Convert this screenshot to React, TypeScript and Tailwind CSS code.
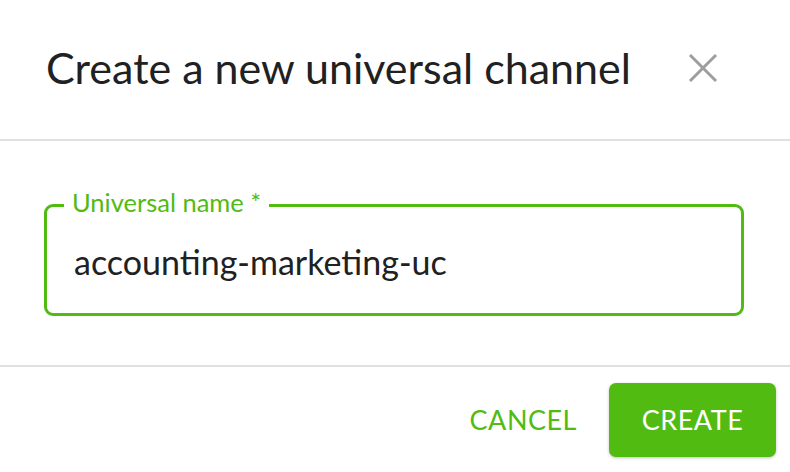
export default function App() {
  return (
    <div className="w-[790px] h-[472px] bg-white flex flex-col overflow-hidden font-['Lato','Noto_Sans',sans-serif]">
      {/* header */}
      <div className="h-[139px] flex items-center justify-between pl-[46px] pr-[72px] pb-[4px]">
        <h2 className="text-[43px] leading-none text-[#212121]">Create a new universal channel</h2>
        <button className="w-[30px] h-[30px] text-[#9e9e9e]">
          <svg viewBox="0 0 30 30" className="w-[30px] h-[30px]" fill="none" stroke="currentColor" strokeWidth="3">
            <path d="M2 2 L28 28 M28 2 L2 28" />
          </svg>
        </button>
      </div>
      <div className="h-[2px] bg-[#e0e0e0]" />

      {/* body */}
      <div className="h-[224px] pl-[44px] pr-[46px] pt-[63px]">
        <div className="relative h-[112px] border-[3px] border-[#52bb12] rounded-[9px] flex items-center pl-[27px] pt-[4px]">
          <span className="absolute -top-[17px] left-[17px] bg-white px-[8px] text-[25.5px] leading-none text-[#52bb12]">
            Universal name *
          </span>
          <span className="text-[34px] text-[#212121] leading-none">accounting-marketing-uc</span>
        </div>
      </div>
      <div className="h-[2px] bg-[#e0e0e0]" />

      {/* footer */}
      <div className="flex items-center justify-end gap-[32px] pr-[14px] pt-[16px]">
        <button className="text-[27px] text-[#52bb12] tracking-[0.5px]">CANCEL</button>
        <button className="w-[167px] h-[74px] rounded-[7px] bg-[#52bb12] text-white text-[27px] tracking-[0.5px] shadow-[0_1px_3px_rgba(0,0,0,0.25)]">
          CREATE
        </button>
      </div>
    </div>
  )
}
